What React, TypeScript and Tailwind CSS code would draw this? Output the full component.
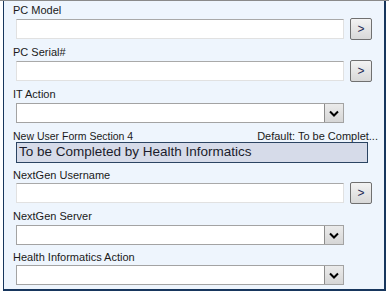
import type { ReactNode } from "react";

const font = { fontFamily: '"Liberation Sans", Arial, sans-serif' };

function Label({ children }: { children: ReactNode }) {
  return <div className="ml-[9px] h-[13px] text-[11px] leading-[13px] text-[#1a1a1a]">{children}</div>;
}

function TextRow() {
  return (
    <div className="ml-[12px] flex h-[22px] items-center gap-[6px]">
      <div className="h-[20px] w-[328px] border border-[#e1e1e1] border-t-[#a9a9a9] bg-white" />
      <button className="flex h-[22px] w-[22px] items-center justify-center rounded-[2px] border border-[#707070] bg-gradient-to-b from-[#f3f3f3] to-[#d8d8d8] text-[12px] leading-none text-[#1c2a55]">
        &gt;
      </button>
    </div>
  );
}

function Select({ className = "" }: { className?: string }) {
  return (
    <div className={`ml-[12px] flex h-[20px] w-[328px] border border-[#a3a3a3] bg-white ${className}`}>
      <div className="flex-1" />
      <div className="flex w-[19px] items-center justify-center border-l border-[#8c8c8c] bg-gradient-to-b from-[#ebebeb] to-[#d6d6d6]">
        <svg width="10" height="7" viewBox="0 0 10 7">
          <polyline points="1,1.5 5,5.5 9,1.5" fill="none" stroke="#000" strokeWidth="2" />
        </svg>
      </div>
    </div>
  );
}

export default function App() {
  return (
    <div className="h-[292px] w-[389px] bg-white" style={font}>
      <div className="border-t border-[#8a8a8a]">
        <div className="ml-[3px] flex h-[290px] w-[383px] flex-col border-b-2 border-l border-r-2 border-[#17365d] bg-[#eef5fd] pt-[3px]">
          <Label>PC Model</Label>
          <div className="mt-[1px]">
            <TextRow />
          </div>

          <div className="mt-[6px]">
            <Label>PC Serial#</Label>
          </div>
          <div className="mt-[1px]">
            <TextRow />
          </div>

          <div className="mt-[6px]">
            <Label>IT Action</Label>
          </div>
          <Select className="mt-[2px]" />

          <div className="mt-[7px] flex h-[12px] items-center justify-between pr-[6px] leading-[12px] text-[#1a1a1a]">
            <span className="ml-[9px] text-[10.5px]">New User Form Section 4</span>
            <span className="text-[11px]">Default: To be Complet...</span>
          </div>
          <div className="ml-[12px] flex h-[21px] w-[352px] items-center border border-[#2b4462] bg-[#d6dbe9] pl-[2px] text-[13.5px] text-[#1b1b2b]">
            To be Completed by Health Informatics
          </div>

          <div className="mt-[6px]">
            <Label>NextGen Username</Label>
          </div>
          <TextRow />

          <div className="mt-[6px]">
            <Label>NextGen Server</Label>
          </div>
          <Select className="mt-[2px]" />

          <div className="mt-[6px]">
            <Label>Health Informatics Action</Label>
          </div>
          <Select className="mt-[1px]" />
        </div>
      </div>
    </div>
  );
}
